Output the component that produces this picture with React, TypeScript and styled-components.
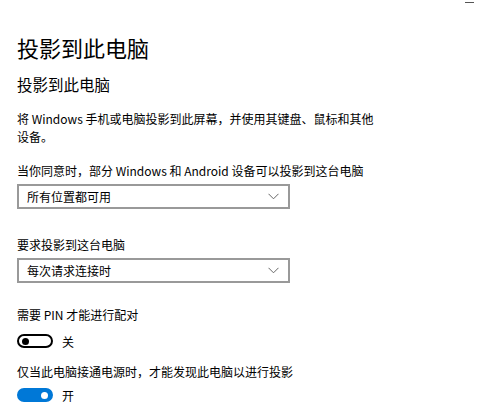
import React from 'react';
import styled, { createGlobalStyle } from 'styled-components';

const GlobalStyle = createGlobalStyle`
    html, body {
        margin: 0;
        padding: 0;
        background: #ffffff;
    }
    body {
        font-family: "Noto Sans CJK SC", "Noto Sans", sans-serif;
        color: #000000;
    }
`
const Page = styled.div`
    position: relative;
    width: 500px;
    height: 406px;
    overflow: hidden;
    padding: 30px 0 0 17px;
    box-sizing: border-box;
`
const MinimizeMark = styled.div`
    position: absolute;
    top: 2px;
    right: 26px;
    width: 9px;
    height: 1px;
    background: #555555;
`
const Title = styled.h1`
    margin: 0;
    font-size: 22px;
    font-weight: 400;
    line-height: 34px;
`
const SubTitle = styled.h2`
    margin: 8px 0 0;
    font-size: 15.5px;
    font-weight: 400;
    line-height: 24px;
`
const Paragraph = styled.p`
    margin: 14px 0 0;
    width: 362px;
    font-size: 12px;
    line-height: 18px;
`
const Label = styled.div<{ gap: number }>`
    margin-top: ${p => p.gap}px;
    font-size: 12px;
    line-height: 18px;
`
const Select = styled.div`
    margin-top: 4px;
    width: 273px;
    height: 25px;
    box-sizing: border-box;
    border: 2px solid #999999;
    display: flex;
    align-items: center;
    justify-content: space-between;
    padding: 0 9px 0 8px;
    font-size: 12px;
`
const Chevron = () => (
    <svg width="11" height="7" viewBox="0 0 11 7">
        <path d="M0.5 0.8 L5.5 5.8 L10.5 0.8" fill="none" stroke="#666" strokeWidth="1" />
    </svg>
)
const ToggleRow = styled.div<{ gap: number }>`
    margin-top: ${p => p.gap}px;
    height: 18px;
    display: flex;
    align-items: center;
    gap: 9px;
    font-size: 12px;
`
const Track = styled.div<{ on: boolean }>`
    width: 36px;
    height: 14px;
    border-radius: 7px;
    box-sizing: border-box;
    border: 2px solid ${p => (p.on ? '#0078d7' : '#000000')};
    background: ${p => (p.on ? '#0078d7' : '#ffffff')};
    display: flex;
    align-items: center;
    justify-content: ${p => (p.on ? 'flex-end' : 'flex-start')};
    padding: 0 3px;
`
const Knob = styled.div<{ on: boolean }>`
    width: 7px;
    height: 7px;
    border-radius: 50%;
    background: ${p => (p.on ? '#ffffff' : '#000000')};
`
const Toggle: React.FC<{ on: boolean; text: string; gap: number }> = ({ on, text, gap }) => (
    <ToggleRow gap={gap}>
        <Track on={on}>
            <Knob on={on} />
        </Track>
        <span>{text}</span>
    </ToggleRow>
)

const App: React.FC = () => {
    return (
        <Page>
            <GlobalStyle />
            <MinimizeMark />
            <Title>投影到此电脑</Title>
            <SubTitle>投影到此电脑</SubTitle>
            <Paragraph>将 Windows 手机或电脑投影到此屏幕，并使用其键盘、鼠标和其他设备。</Paragraph>
            <Label gap={16}>当你同意时，部分 Windows 和 Android 设备可以投影到这台电脑</Label>
            <Select>
                <span>所有位置都可用</span>
                <Chevron />
            </Select>
            <Label gap={27}>要求投影到这台电脑</Label>
            <Select>
                <span>每次请求连接时</span>
                <Chevron />
            </Select>
            <Label gap={23}>需要 PIN 才能进行配对</Label>
            <Toggle on={false} text="关" gap={8} />
            <Label gap={13}>仅当此电脑接通电源时，才能发现此电脑以进行投影</Label>
            <Toggle on={true} text="开" gap={5} />
        </Page>
    )
}

export default App;
